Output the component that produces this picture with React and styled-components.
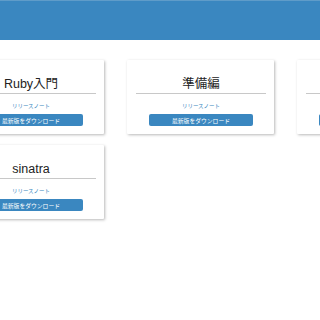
import React from "react";
import styled, { createGlobalStyle } from "styled-components";

const books = [
  { title: "Ruby入門" },
  { title: "準備編" },
  { title: "Rails入門" },
  { title: "sinatra" },
];

const GlobalStyle = createGlobalStyle`
  html, body {
    margin: 0;
    padding: 0;
    background: #ffffff;
    overflow: hidden;
  }
  body {
    font-family: "Liberation Sans", "Noto Sans CJK JP", sans-serif;
  }
`;

const App = () => {
  return (
    <Page>
      <GlobalStyle />
      <Header />
      <CardGrid>
        {books.map((item, index) => (
          <Card key={index}>
            <Title>{item.title}</Title>
            <Divider />
            <NoteLink href="#">リリースノート</NoteLink>
            <DownloadButton>最新版をダウンロード</DownloadButton>
          </Card>
        ))}
      </CardGrid>
    </Page>
  );
};

export default App;

const Page = styled.div`
  width: 320px;
  height: 320px;
  overflow: hidden;
`;

const Header = styled.div`
  height: 40px;
  background: #3a87c0;
  border-top: 1px solid #5f9cc9;
  box-sizing: border-box;
`;

const CardGrid = styled.div`
  display: grid;
  grid-template-columns: repeat(3, 147px);
  column-gap: 23px;
  row-gap: 11px;
  margin: 20px 0 0 -43px;
`;

const Card = styled.div`
  display: flex;
  flex-direction: column;
  align-items: center;
  padding: 17px 8px 8px 9px;
  background: #ffffff;
  box-shadow: 1px 1px 3px rgba(0, 0, 0, 0.28);
  border-radius: 1px;
`;

const Title = styled.div`
  font-size: 12.5px;
  line-height: 15px;
  color: #222222;
  white-space: nowrap;
`;

const Divider = styled.div`
  align-self: stretch;
  height: 1px;
  margin-top: 1px;
  background: #c8c8c8;
`;

const NoteLink = styled.a`
  margin-top: 8px;
  font-size: 5.5px;
  line-height: 8px;
  color: #3a87c0;
  text-decoration: none;
  white-space: nowrap;
`;

const DownloadButton = styled.div`
  margin-top: 4px;
  width: 104px;
  height: 12px;
  display: flex;
  align-items: center;
  justify-content: center;
  background: #3a87c0;
  border-radius: 2px;
  color: #ffffff;
  font-size: 5.8px;
  white-space: nowrap;
`;
